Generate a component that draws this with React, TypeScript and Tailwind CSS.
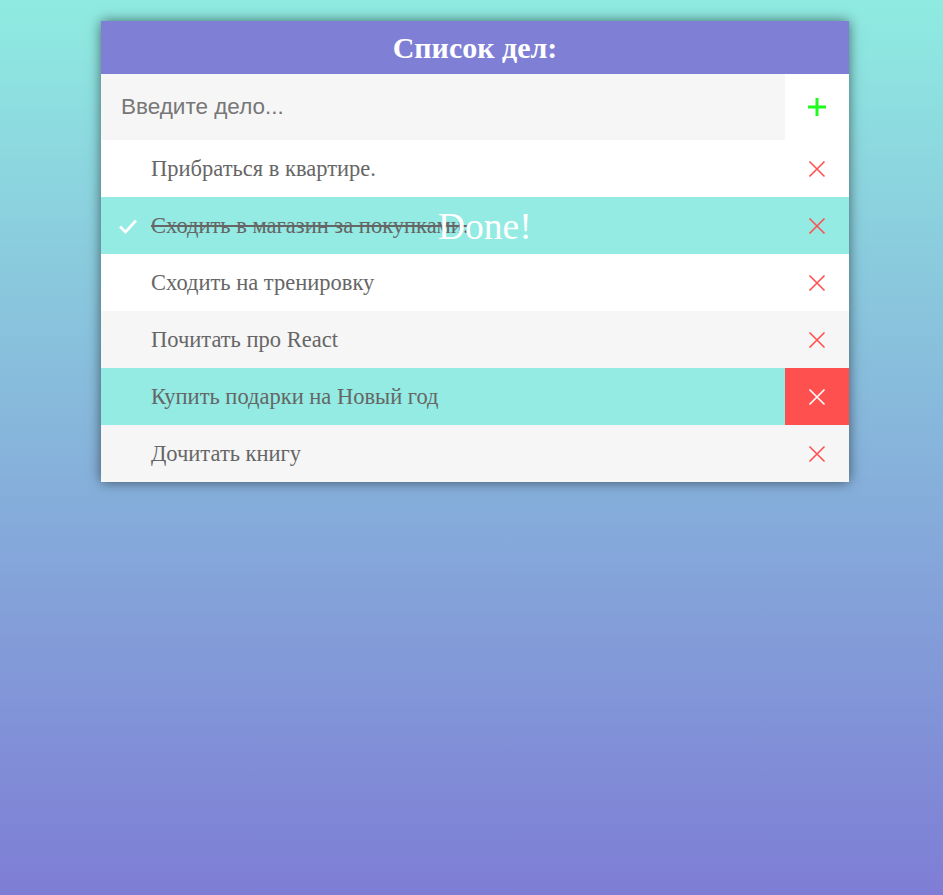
import React from "react";

const items = [
  { text: "Прибраться в квартире.", bg: "bg-white" },
  { text: "Сходить в магазин за покупками.", bg: "bg-[#93ebe3]", done: true },
  { text: "Сходить на тренировку", bg: "bg-white" },
  { text: "Почитать про React", bg: "bg-[#f6f6f6]" },
  { text: "Купить подарки на Новый год", bg: "bg-[#93ebe3]", hover: true },
  { text: "Дочитать книгу", bg: "bg-[#f6f6f6]" },
];

function XIcon({ color }: { color: string }) {
  return (
    <svg width="18" height="18" viewBox="0 0 18 18">
      <path d="M1.5 1.5 L16.5 16.5 M16.5 1.5 L1.5 16.5" stroke={color} strokeWidth="1.6" fill="none" />
    </svg>
  );
}

export default function App() {
  return (
    <div className="min-h-[895px] w-full bg-[linear-gradient(to_bottom,#8febe1,#7e7dd5)] pt-[21px]">
      <div className="ml-[101px] w-[748px] bg-white shadow-[0_0_12px_rgba(0,0,0,0.55)]">
        <div className="flex h-[53px] items-center justify-center bg-[#7f7fd5]">
          <h1 className="text-[30px] font-bold text-white [font-family:'Liberation_Serif',serif]">Список дел:</h1>
        </div>
        <div className="flex h-[66px]">
          <div className="flex flex-1 items-center bg-[#f6f6f6] pl-[20px] text-[22.5px] text-[#777] [font-family:'Liberation_Sans',sans-serif]">
            Введите дело...
          </div>
          <div className="flex w-[64px] items-center justify-center bg-white">
            <svg width="20" height="20" viewBox="0 0 20 20">
              <path d="M10 1 V19 M1 10 H19" stroke="#1dfc1d" strokeWidth="3" fill="none" />
            </svg>
          </div>
        </div>
        {items.map((it, i) => (
          <div key={i} className={`relative flex h-[57px] items-center ${it.bg}`}>
            <div className="flex w-[50px] items-center justify-center pl-[4px]">
              {it.done && (
                <svg width="20" height="16" viewBox="0 0 20 16">
                  <path d="M2 8.5 L7.5 14 L18 2.5" stroke="white" strokeWidth="2.6" fill="none" />
                </svg>
              )}
            </div>
            <div
              className={`flex-1 text-[22.5px] text-[#666] [font-family:'Liberation_Serif',serif] ${it.done ? "line-through decoration-[#666]" : ""}`}
            >
              {it.text}
            </div>
            <div className={`flex h-full w-[64px] items-center justify-center ${it.hover ? "bg-[#ff5050]" : ""}`}>
              <XIcon color={it.hover ? "white" : "#ff5050"} />
            </div>
            {it.done && (
              <div className="pointer-events-none absolute left-[337px] top-[2px] text-[37.5px] text-white [font-family:'Liberation_Serif',serif]">
                Done!
              </div>
            )}
          </div>
        ))}
      </div>
    </div>
  );
}
